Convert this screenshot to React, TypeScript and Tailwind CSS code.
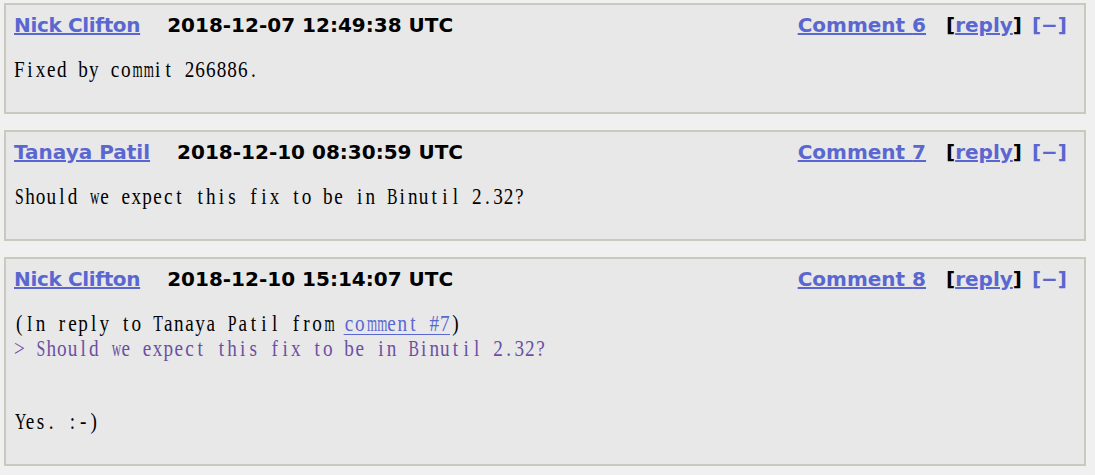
import React from "react";

const LINK = "text-[#5a67d0]";

function cellClass(ch: string) {
  if ("mwMW".includes(ch)) return "inline-block w-[13.31px] text-center scale-x-[0.68]";
  if ("YTBSIP".includes(ch)) return "inline-block w-[13.31px] text-center scale-x-[0.82]";
  return "inline-block w-[13.31px] text-center";
}

function Mono({ text }: { text: string }) {
  return (
    <>
      {Array.from(text).map((ch, i) => (
        <span key={i} className={cellClass(ch)}>
          {ch === " " ? "\u00a0" : ch}
        </span>
      ))}
    </>
  );
}

function Line({ children }: { children?: React.ReactNode }) {
  return <div className="h-[24.5px] leading-[24.5px] whitespace-nowrap">{children}</div>;
}

type C = {
  name: string;
  date: string;
  num: number;
  nameCls: string;
  lines: React.ReactNode[];
};

function Comment({ c }: { c: C }) {
  return (
    <div className="border-2 border-[#c9c9bd] bg-[#e8e8e8] pl-[8px] pr-[17px] pt-[8px] pb-[30.5px]">
      <div className="flex items-center h-[24px] font-['DejaVu_Sans',sans-serif] font-bold text-[20px] leading-[24px]">
        <a href="#" className={`${LINK} underline ${c.nameCls}`}>{c.name}</a>
        <span className="ml-[27px] text-black">{c.date}</span>
        <div className="ml-auto flex items-center">
          <a href="#" className={`${LINK} underline`}>Comment {c.num}</a>
          <span className="ml-[20px] text-black">
            [<a href="#" className={`${LINK} underline`}>reply</a>]
          </span>
          <a href="#" className={`${LINK} ml-[10px]`}>[−]</a>
        </div>
      </div>
      <div className="mt-[20px] origin-left scale-x-[0.8] font-['Liberation_Serif',serif] text-[24px] text-black">
        {c.lines.map((l, i) => (
          <Line key={i}>{l}</Line>
        ))}
      </div>
    </div>
  );
}

export default function App() {
  const comments: C[] = [
    {
      name: "Nick Clifton",
      date: "2018-12-07 12:49:38 UTC",
      num: 6,
      nameCls: "tracking-[-0.35px]",
      lines: [<Mono text="Fixed by commit 266886." />],
    },
    {
      name: "Tanaya Patil",
      date: "2018-12-10 08:30:59 UTC",
      num: 7,
      nameCls: "",
      lines: [<Mono text="Should we expect this fix to be in Binutil 2.32?" />],
    },
    {
      name: "Nick Clifton",
      date: "2018-12-10 15:14:07 UTC",
      num: 8,
      nameCls: "tracking-[-0.35px]",
      lines: [
        <>
          <Mono text="(In reply to Tanaya Patil from " />
          <a href="#" className={`${LINK} inline-block leading-[22px] border-b border-current`}>
            <Mono text="comment #7" />
          </a>
          <Mono text=")" />
        </>,
        <span className="text-[#6b4fa3]">
          <Mono text="> Should we expect this fix to be in Binutil 2.32?" />
        </span>,
        null,
        null,
        <Mono text="Yes. :-)" />,
      ],
    },
  ];
  return (
    <div className="min-h-[475px] bg-[#f0f0f0] pt-[3px] pl-[4px] pr-[9px] flex flex-col gap-[16px]">
      {comments.map((c, i) => (
        <Comment key={i} c={c} />
      ))}
    </div>
  );
}
